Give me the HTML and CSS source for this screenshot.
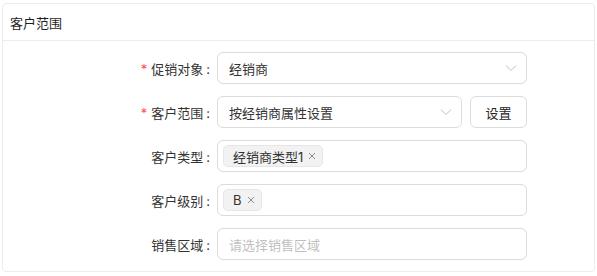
FILE: index.html
```html
<!DOCTYPE html>
<html lang="zh-CN">
<head>
  <meta charset="UTF-8">
  <meta name="viewport" content="width=device-width, initial-scale=1.0">
  <link rel="stylesheet" href="styles.css">
</head>
<body>
  <div class="card">
    <div class="card-header">客户范围</div>
    <div class="card-body">

      <div class="form-row">
        <label class="form-label"><span class="required">*</span>促销对象<span class="colon">:</span></label>
        <div class="form-control">
          <div class="select">
            <span class="select-value">经销商</span>
            <svg class="select-arrow" width="12" height="12" viewBox="0 0 12 12"><path d="M1 3.5 L6 8.5 L11 3.5" fill="none" stroke="#bfbfbf" stroke-width="1"/></svg>
          </div>
        </div>
      </div>

      <div class="form-row">
        <label class="form-label"><span class="required">*</span>客户范围<span class="colon">:</span></label>
        <div class="form-control">
          <div class="select">
            <span class="select-value">按经销商属性设置</span>
            <svg class="select-arrow" width="12" height="12" viewBox="0 0 12 12"><path d="M1 3.5 L6 8.5 L11 3.5" fill="none" stroke="#bfbfbf" stroke-width="1"/></svg>
          </div>
          <button class="btn">设置</button>
        </div>
      </div>

      <div class="form-row">
        <label class="form-label">客户类型<span class="colon">:</span></label>
        <div class="form-control">
          <div class="select multi">
            <span class="tag">经销商类型1<svg class="tag-close" width="8" height="8" viewBox="0 0 8 8"><path d="M1 1 L7 7 M7 1 L1 7" stroke="#8c8c8c" stroke-width="1"/></svg></span>
          </div>
        </div>
      </div>

      <div class="form-row">
        <label class="form-label">客户级别<span class="colon">:</span></label>
        <div class="form-control">
          <div class="select multi">
            <span class="tag">B<svg class="tag-close" width="8" height="8" viewBox="0 0 8 8"><path d="M1 1 L7 7 M7 1 L1 7" stroke="#8c8c8c" stroke-width="1"/></svg></span>
          </div>
        </div>
      </div>

      <div class="form-row">
        <label class="form-label">销售区域<span class="colon">:</span></label>
        <div class="form-control">
          <div class="select">
            <span class="placeholder">请选择销售区域</span>
          </div>
        </div>
      </div>

    </div>
  </div>
</body>
</html>
```

FILE: styles.css
```css
body {
  margin: 0;
  background: #ffffff;
  font-family: "Inter", "Noto Sans CJK SC", sans-serif;
  font-size: 13px;
  color: #262626;
}

.card {
  margin: 3px 2px 0 2px;
  border: 1px solid #ececec;
  border-radius: 4px;
  background: #ffffff;
}

.card-header {
  height: 36px;
  display: flex;
  align-items: center;
  padding-left: 7px;
  border-bottom: 1px solid #ececec;
  color: #1f1f1f;
}

.card-body {
  display: flex;
  flex-direction: column;
  gap: 12px;
  padding: 11px 0 11px 0;
}

.form-row {
  display: flex;
  align-items: center;
  height: 32px;
}

.form-label {
  width: 214px;
  text-align: right;
  padding-right: 7px;
  color: #333333;
  box-sizing: border-box;
}

.colon {
  margin-left: 3px;
}

.required {
  color: #ff4d4f;
  margin-right: 4px;
}

.form-control {
  display: flex;
  gap: 8px;
  width: 310px;
}

.select {
  flex: 1;
  height: 32px;
  box-sizing: border-box;
  border: 1px solid #dcdcdc;
  border-radius: 6px;
  display: flex;
  align-items: center;
  padding: 0 9px 0 11px;
}

.select.multi {
  padding-left: 5px;
}

.select-value {
  flex: 1;
  color: #333333;
}

.placeholder {
  color: #bfbfbf;
}

.select-arrow {
  flex: none;
}

.tag {
  display: inline-flex;
  align-items: center;
  height: 22px;
  box-sizing: border-box;
  padding: 0 6px 0 9px;
  background: #f2f2f2;
  border: 1px solid #e6e6e6;
  border-radius: 5px;
  color: #333333;
}

.tag-close {
  margin-left: 5px;
}

.btn {
  width: 57px;
  height: 32px;
  box-sizing: border-box;
  border: 1px solid #dcdcdc;
  border-radius: 6px;
  background: #ffffff;
  font-family: inherit;
  font-size: 13px;
  color: #262626;
  padding: 0;
}
```
